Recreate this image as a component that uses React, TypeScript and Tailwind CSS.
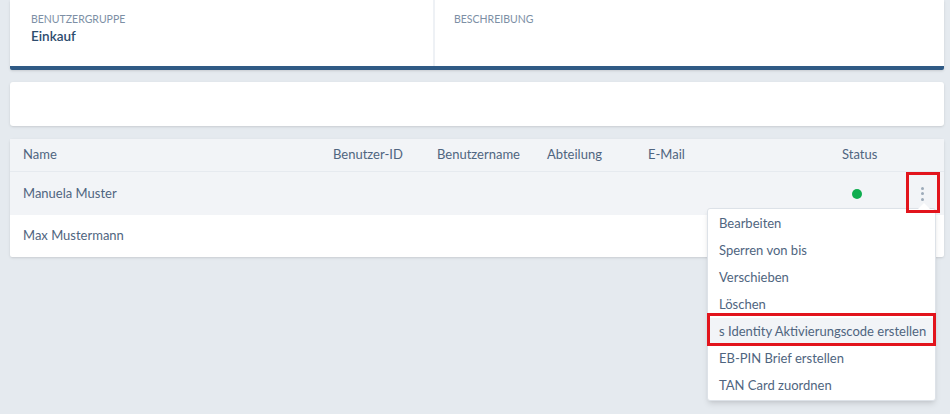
import { Fragment } from 'react'

const COLS = ['w-[310px]', 'w-[104px]', 'w-[110px]', 'w-[101px]', 'w-[194px]']
const HEADERS = ['Name', 'Benutzer-ID', 'Benutzername', 'Abteilung', 'E-Mail']

const MENU = [
  'Bearbeiten',
  'Sperren von bis',
  'Verschieben',
  'Löschen',
  's Identity Aktivierungscode erstellen',
  'EB-PIN Brief erstellen',
  'TAN Card zuordnen',
]

function Kebab() {
  return (
    <div className="flex flex-col items-center gap-[2.5px]">
      <span className="w-[3px] h-[3px] rounded-full bg-[#9dabb9]" />
      <span className="w-[3px] h-[3px] rounded-full bg-[#9dabb9]" />
      <span className="w-[3px] h-[3px] rounded-full bg-[#9dabb9]" />
    </div>
  )
}

export default function App() {
  return (
    <div
      className="relative h-[414px] w-[950px] overflow-hidden bg-[#e5eaef] pl-[10px] pr-[6px] text-[13px] text-[#4f6580] whitespace-nowrap"
      style={{ fontFamily: 'Lato, "Open Sans", sans-serif' }}
    >
      {/* Group header */}
      <div className="flex h-[70px] bg-white border-b-4 border-[#2f5a85] rounded-b-[2px] shadow-sm">
        <div className="w-[425px] border-r-2 border-[#eef1f5] pl-[21px] pt-[12px]">
          <div className="text-[10.5px] leading-[14px] uppercase text-[#7d8fa5]">Benutzergruppe</div>
          <div className="text-[13.5px] leading-[20px] font-semibold text-[#2d4c6e]">Einkauf</div>
        </div>
        <div className="flex-1 pl-[19px] pt-[12px]">
          <div className="text-[10.5px] leading-[14px] uppercase text-[#7d8fa5]">Beschreibung</div>
        </div>
      </div>

      {/* Filter bar */}
      <div className="mt-[12px] h-[44px] rounded-[3px] bg-white shadow-sm" />

      {/* Users table */}
      <div className="mt-[13px] rounded-[2px] bg-white shadow-sm">
        <div className="flex h-[33px] items-center border-b border-[#e6eaef] bg-[#f2f4f7] pl-[13px]">
          {HEADERS.map((h, i) => (
            <div key={h} className={COLS[i]}>{h}</div>
          ))}
          <div>Status</div>
        </div>
        <div className="flex h-[43px] items-center bg-[#f2f4f7] pl-[13px]">
          <div className={COLS[0]}>Manuela Muster</div>
          {COLS.slice(1).map((c) => (
            <Fragment key={c}><div className={c} /></Fragment>
          ))}
          <div className="ml-[10px] w-[10px] h-[10px] rounded-full bg-[#0fad4f]" />
          <div className="ml-[59px]"><Kebab /></div>
        </div>
        <div className="flex h-[42px] items-center pl-[13px]">
          <div className={COLS[0]}>Max Mustermann</div>
        </div>
      </div>

      {/* Row action menu */}
      <div className="absolute left-[707px] top-[208px] w-[229px] rounded-[3px] border border-[#dde2e8] bg-white py-[1px] shadow-md">
        <div className="absolute -top-[6px] left-[210px] h-0 w-0 border-x-[6px] border-b-[6px] border-x-transparent border-b-white" />
        {MENU.map((m, i) => (
          <div
            key={m}
            className={
              'flex h-[27px] items-center pl-[11px] ' + (i === 4 ? 'bg-[#f2f4f7]' : '')
            }
          >
            {m}
          </div>
        ))}
      </div>

      {/* Highlight annotations */}
      <div className="absolute left-[906px] top-[172px] h-[41px] w-[34px] border-[3px] border-[#e2141c]" />
      <div className="absolute left-[707px] top-[313px] h-[33px] w-[229px] border-[3px] border-[#e2141c]" />
    </div>
  )
}
